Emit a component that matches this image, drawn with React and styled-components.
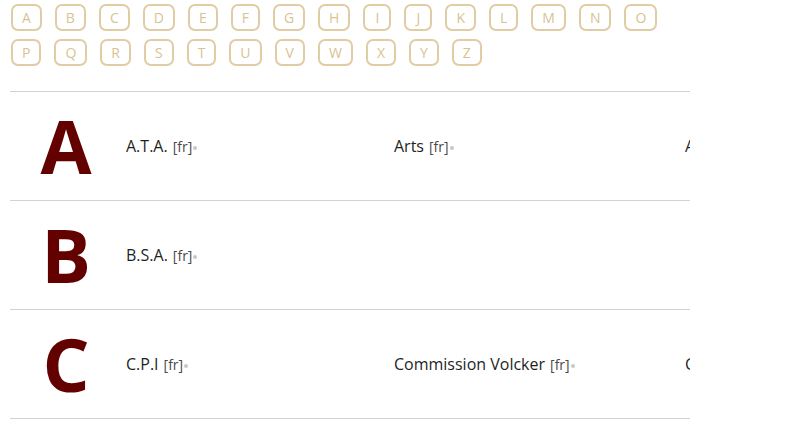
import React from 'react';
import styled, { createGlobalStyle } from 'styled-components';

const GlobalStyle = createGlobalStyle`
  body {
    margin: 0;
    background: #fff;
    font-family: "Open Sans", "Liberation Sans", sans-serif;
  }
`;

const Page = styled.div`
  width: 680px;
  padding: 4px 0 0 10px;
  overflow: hidden;
`;

const Alphabet = styled.div`
  display: flex;
  flex-wrap: wrap;
  column-gap: 13px;
  row-gap: 8px;
  width: 660px;
  padding-left: 1px;
  margin-bottom: 25px;
`;

const LetterButton = styled.a`
  box-sizing: border-box;
  min-width: 28px;
  height: 27px;
  padding: 0 9px;
  display: flex;
  align-items: center;
  justify-content: center;
  border: 2px solid #e0cda4;
  border-radius: 7px;
  color: #d8c393;
  font-size: 14px;
  text-decoration: none;
`;

const Section = styled.section`
  display: flex;
  align-items: center;
  height: 108px;
  border-top: 1px solid #d3d3d3;
  &:last-child {
    border-bottom: 1px solid #d3d3d3;
  }
`;

const BigLetter = styled.div`
  width: 112px;
  flex: none;
  text-align: center;
  color: #630000;
  font-size: 74px;
  font-weight: 700;
  line-height: 1;
  margin-right: 4px;
`;

const Entries = styled.ul`
  flex: 1;
  display: grid;
  grid-template-columns: 268px 291px 1fr;
  list-style: none;
  margin: 0;
  padding: 0;
  overflow: hidden;
`;

const Entry = styled.li`
  font-size: 16px;
  color: #1f1f1f;
  white-space: nowrap;
`;

const Lang = styled.span`
  font-size: 14px;
  color: #4a4a4a;
  margin-left: 5px;
`;

const Dot = styled.span`
  display: inline-block;
  width: 4px;
  height: 4px;
  border-radius: 50%;
  background: #c8c8c8;
  margin-left: 1px;
  vertical-align: middle;
`;

const letters = 'ABCDEFGHIJKLMNOPQRSTUVWXYZ'.split('');

const sections = [
  { letter: 'A', items: ['A.T.A.', 'Arts', 'Assemblée'] },
  { letter: 'B', items: ['B.S.A.'] },
  { letter: 'C', items: ['C.P.I', 'Commission Volcker', 'Conseil'] },
];

export default function App() {
  return (
    <Page>
      <GlobalStyle />
      <Alphabet>
        {letters.map((l) => (
          <LetterButton key={l} href={'#' + l}>
            {l}
          </LetterButton>
        ))}
      </Alphabet>
      {sections.map((s) => (
        <Section key={s.letter}>
          <BigLetter>{s.letter}</BigLetter>
          <Entries>
            {s.items.map((item) => (
              <Entry key={item}>
                {item}
                <Lang>[fr]</Lang>
                <Dot />
              </Entry>
            ))}
          </Entries>
        </Section>
      ))}
    </Page>
  );
}
